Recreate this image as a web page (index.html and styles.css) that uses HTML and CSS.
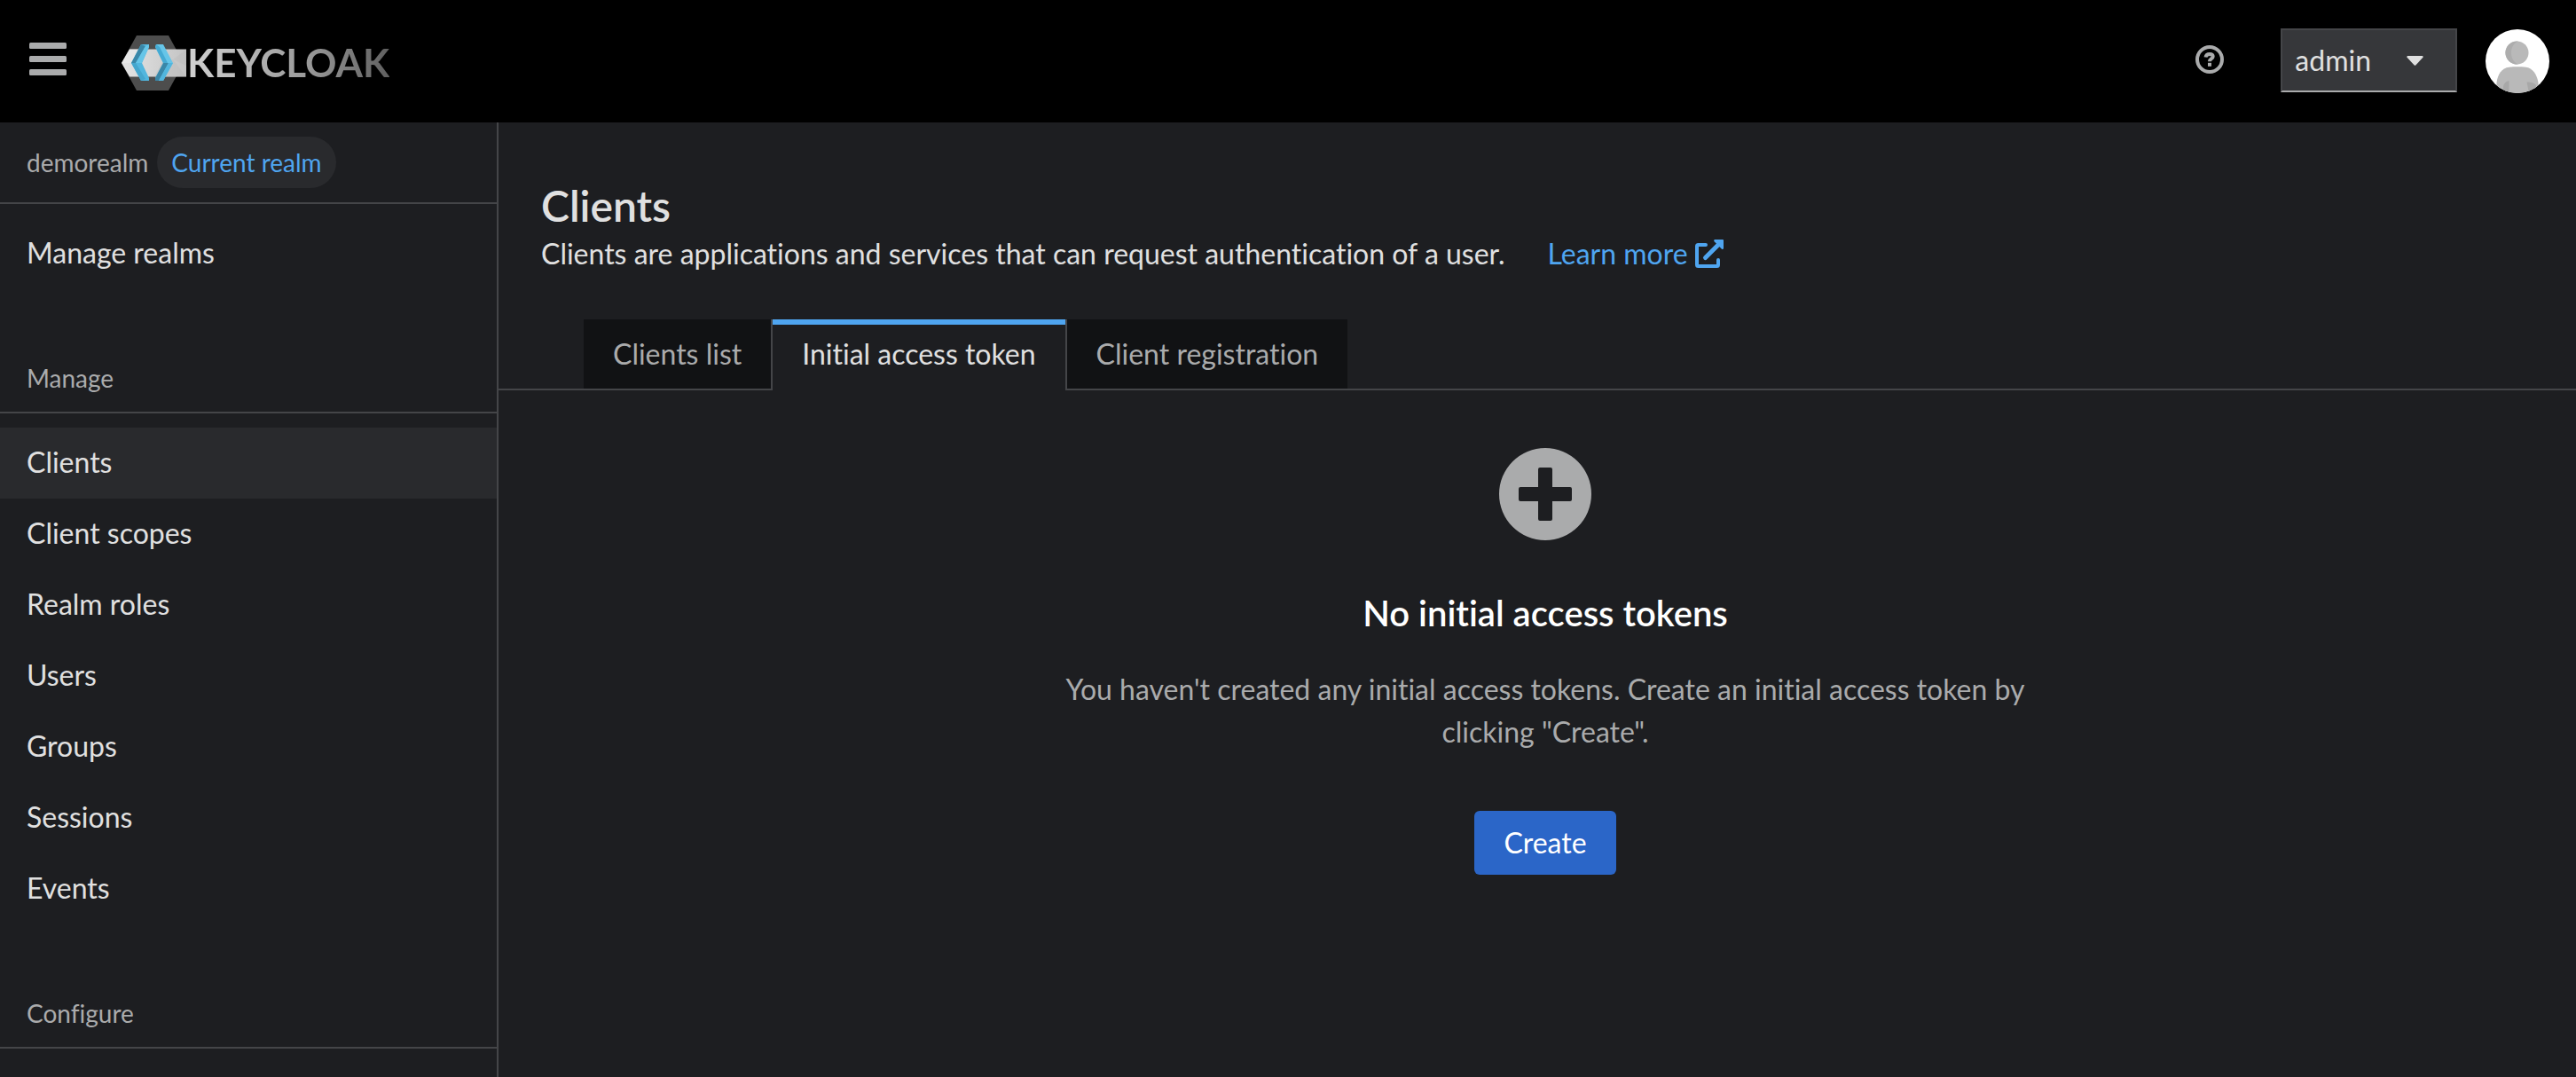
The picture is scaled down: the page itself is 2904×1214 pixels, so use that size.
FILE: index.html
```html
<!DOCTYPE html>
<html lang="en">
<head>
<meta charset="utf-8">
<title>Clients - Keycloak Administration Console</title>
<meta name="viewport" content="width=device-width, initial-scale=1">
<link rel="stylesheet" href="styles.css">
</head>
<body>
<header class="masthead">
  <button class="icon-button" type="button" aria-label="Global navigation">
    <svg width="42" height="38" viewBox="0 0 42 38" fill="currentColor" aria-hidden="true">
      <rect width="42" height="7" rx="1.5"/>
      <rect y="15" width="42" height="7" rx="1.5"/>
      <rect y="30" width="42" height="7" rx="1.5"/>
    </svg>
  </button>
  <a class="brand" href="#">
    <svg width="75" height="62" viewBox="0 0 75 62" aria-hidden="true">
      <defs>
        <linearGradient id="band" x1="0" x2="1"><stop offset="0" stop-color="#e4e4e4"/><stop offset="1" stop-color="#c4c4c4"/></linearGradient>
      </defs>
      <path fill="#4d4d4d" d="M18 0h36l17 31-17 31H18L1 31z"/>
      <path fill="url(#band)" d="M1 31l9-15.500h64v31H10z"/>
      <path fill="#efefef" opacity=".5" d="M10 15.500h14L12 31H1z"/>
      <path fill="#b8b8b8" opacity=".35" d="M47 30l12-3 15 19.500H38zM59 27l15-11.500V34z"/>
      <path fill="#52b6de" d="M23 10h9v3l-8 18 8 17v3h-9L12 31z"/>
      <path fill="#3a87a8" d="M23 10l5 2-11 19h-5z"/>
      <path fill="#66c5e8" d="M28 12l4-2v3l-8 18h-7z"/>
      <path fill="#45a6cd" d="M12 31l5 0 11 18-5 2z"/>
      <path fill="#66c5e8" d="M40 10h8l11 21-11 20h-9v-3l9-17-9-18z"/>
      <path fill="#45aad3" d="M40 10l4 3 9 18h-5l-9-18z"/>
      <path fill="#3a87a8" d="M48 31h6L43 51h-4v-3z"/>
      <path fill="#52b6de" d="M54 31h5L48 51h-5z"/>
    </svg>
    <span class="brand-name">KEYCLOAK</span>
  </a>
  <div class="masthead-tools">
    <button class="icon-button" type="button" aria-label="Help">
      <svg width="32" height="32" viewBox="0 0 32 32" fill="none" stroke="currentColor" stroke-width="4" aria-hidden="true">
        <circle cx="16" cy="16" r="14"/>
        <path d="M11.500 13.500c.4-2.500 2-3.500 4.500-3.500s3.700 1.100 3.700 2.700c0 2.600-3.700 2.300-3.700 5.600"/>
        <path d="M14 21.800h4"/>
      </svg>
    </button>
    <button class="user-toggle" type="button" aria-haspopup="menu">
      <span>admin</span>
      <svg width="19" height="11" viewBox="0 0 19 11" fill="currentColor" aria-hidden="true"><path d="M1.200 0h16.600q1.500.6.600 1.800l-8.100 8.600q-.8.700-1.600 0L.6 1.800Q-.3.600 1.200 0z"/></svg>
    </button>
    <svg class="avatar" width="72" height="72" viewBox="0 0 72 72" role="img" aria-label="Avatar">
      <defs><clipPath id="avatar-clip"><circle cx="36" cy="36" r="36"/></clipPath></defs>
      <g clip-path="url(#avatar-clip)">
        <rect width="72" height="72" fill="#fff"/>
        <circle cx="35.500" cy="26.500" r="13" fill="#b9b9b9"/>
        <path fill="#adadad" d="M37 13.600a13 13 0 1 0 0 25.800c-5-1.500-8-7-8-12.900s3-11.400 8-12.900z"/>
        <path fill="#b9b9b9" d="M12.500 72V60c1-9 6-16.500 14-17.300 6-.6 13-.6 19 0C53 43.500 58 51 59.500 60v12z"/>
        <path fill="#a8a8a8" d="M20 66c0-4 2-7 6.500-8v14H20zM46.500 59.500c6 0 9 1 10.500 4V72h-8z"/>
      </g>
    </svg>
  </div>
</header>

<div class="page">
  <nav class="sidebar" aria-label="Realm">
    <div class="current-realm">
      <span>demorealm</span>
      <span class="realm-label">Current realm</span>
    </div>
    <ul class="nav-list">
      <li><a class="nav-link" href="#">Manage realms</a></li>
    </ul>
    <h2 class="nav-title">Manage</h2>
    <ul class="nav-list">
      <li><a class="nav-link nav-link-current" href="#" aria-current="page">Clients</a></li>
      <li><a class="nav-link" href="#">Client scopes</a></li>
      <li><a class="nav-link" href="#">Realm roles</a></li>
      <li><a class="nav-link" href="#">Users</a></li>
      <li><a class="nav-link" href="#">Groups</a></li>
      <li><a class="nav-link" href="#">Sessions</a></li>
      <li><a class="nav-link" href="#">Events</a></li>
    </ul>
    <h2 class="nav-title">Configure</h2>
  </nav>

  <main class="content">
    <div class="page-head">
      <h1>Clients</h1>
      <p class="page-intro">
        <span>Clients are applications and services that can request authentication of a user.</span>
        <a class="learn-more" href="#">Learn more
          <svg width="32" height="32" viewBox="0 0 32 32" fill="none" stroke="currentColor" stroke-width="4" stroke-linecap="round" aria-hidden="true">
            <path d="M12 6H3.500Q2 6 2 7.500v21Q2 30 3.500 30h21q1.500 0 1.500-1.500V23"/>
            <path stroke-width="5" d="M11.500 20.500L27 5"/>
            <path fill="currentColor" stroke="none" d="M22 0h9q1 0 1 1v9q-.6 1.500-2 .7L21.300 2q-.6-1.400.7-2z"/>
          </svg>
        </a>
      </p>
    </div>

    <div class="tabs" role="tablist">
      <button class="tab" type="button" role="tab" aria-selected="false">Clients list</button>
      <button class="tab tab-current" type="button" role="tab" aria-selected="true">Initial access token</button>
      <button class="tab" type="button" role="tab" aria-selected="false">Client registration</button>
    </div>

    <section class="empty-state">
      <svg width="104" height="104" viewBox="0 0 104 104" aria-hidden="true">
        <path fill="#aaabac" fill-rule="evenodd" d="M52 0a52 52 0 1 1 0 104a52 52 0 1 1 0-104zM46 22q-2 0-2 2v20H24q-2 0-2 2v12q0 2 2 2h20v20q0 2 2 2h12q2 0 2-2V60h20q2 0 2-2V46q0-2-2-2H60V24q0-2-2-2z"/>
      </svg>
      <h2>No initial access tokens</h2>
      <p>You haven't created any initial access tokens. Create an initial access token by clicking "Create".</p>
      <button class="primary-button" type="button">Create</button>
    </section>
  </main>
</div>
</body>
</html>
```
FILE: styles.css
```css
:root {
  --surface: #1d1e21;
  --surface-raised: #292a2d;
  --line: #444548;
  --text: #e0e0e0;
  --text-dim: #aaabac;
  --link: #4fa5f0;
}

* {
  box-sizing: border-box;
}

body {
  display: flex;
  flex-direction: column;
  min-height: 100vh;
  margin: 0;
  background: var(--surface);
  color: var(--text);
  font: 32px/48px "Lato", "Noto Sans", sans-serif;
  font-variant-ligatures: none;
}

h1,
h2,
p,
ul {
  margin: 0;
  padding: 0;
}

a {
  color: inherit;
  text-decoration: none;
}

button {
  margin: 0;
  padding: 0;
  border: 0;
  background: none;
  color: inherit;
  font: inherit;
  font-variant-ligatures: none;
  cursor: pointer;
}

svg {
  display: block;
  flex: none;
}

/* Masthead */
.masthead {
  display: flex;
  align-items: center;
  height: 138px;
  padding: 0 30px 0 33px;
  background: #000;
}

.icon-button {
  padding-bottom: 4px;
  color: var(--text-dim);
}

.brand {
  display: flex;
  align-items: center;
  margin-left: 61px;
  padding-top: 3px;
}

.brand-name {
  padding-bottom: 2px;
  background: linear-gradient(90deg, #d2d2d2, #999 60%, #606060);
  background-clip: text;
  -webkit-background-clip: text;
  color: transparent;
  font-size: 44px;
  font-weight: 700;
}

.masthead-tools {
  display: flex;
  align-items: center;
  margin-left: auto;
}

.user-toggle {
  display: flex;
  align-items: center;
  gap: 40px;
  margin: 0 32px 2px 64px;
  padding: 10px 36px 10px 14px;
  border: 2px solid var(--line);
  border-bottom-color: var(--text-dim);
  background: #36373a;
}

/* Sidebar */
.page {
  display: flex;
  flex: 1;
}

.sidebar {
  flex: none;
  width: 562px;
  border-right: 2px solid var(--line);
}

.current-realm {
  display: flex;
  align-items: center;
  gap: 10px;
  padding: 16px 30px;
  border-bottom: 2px solid var(--line);
  color: var(--text-dim);
  font-size: 28px;
  line-height: 42px;
}

.realm-label {
  padding: 8px 16px;
  border-radius: 30px;
  background: var(--surface-raised);
  color: var(--link);
}

.nav-list {
  list-style: none;
}

.current-realm + .nav-list,
.nav-title + .nav-list {
  padding-top: 16px;
}

.nav-link {
  display: block;
  padding: 15px 30px 17px;
}

.nav-link-current {
  background: var(--surface-raised);
}

.nav-title {
  padding: 79px 30px 17px;
  border-bottom: 2px solid var(--line);
  color: var(--text-dim);
  font-size: 28px;
  font-weight: 400;
  line-height: 42px;
}

/* Page content */
.content {
  flex: 1;
  min-width: 0;
}

.page-head {
  padding: 64px 48px 48px;
}

h1 {
  font-size: 48px;
  font-weight: 600;
  line-height: 60px;
}

.page-intro {
  display: flex;
  flex-wrap: wrap;
  gap: 48px;
}

.learn-more {
  display: flex;
  align-items: center;
  gap: 8px;
  padding-bottom: 2px;
  color: var(--link);
}

.tabs {
  display: flex;
  padding-left: 96px;
  box-shadow: inset 0 -2px var(--line);
}

.tab {
  padding: 15px 33px;
  border-bottom: 2px solid var(--line);
  background: #111214;
  color: var(--text-dim);
}

.tab-current {
  padding-bottom: 17px;
  border: solid var(--line);
  border-width: 0 2px;
  background: linear-gradient(var(--link) 6px, var(--surface) 6px) border-box;
  color: var(--text);
  box-shadow: inset 0 6px var(--link);
}

.empty-state {
  display: flex;
  flex-direction: column;
  align-items: center;
  padding: 65px 30px 64px 48px;
  text-align: center;
}

.empty-state h2 {
  margin-top: 56px;
  color: #fff;
  font-size: 40px;
  font-weight: 600;
  line-height: 52px;
}

.empty-state p {
  max-width: 1120px;
  margin-top: 36px;
  color: var(--text-dim);
}

.primary-button {
  margin-top: 65px;
  padding: 12px 33px;
  border-radius: 6px;
  background: #2b66c8;
  color: #fff;
}
```
